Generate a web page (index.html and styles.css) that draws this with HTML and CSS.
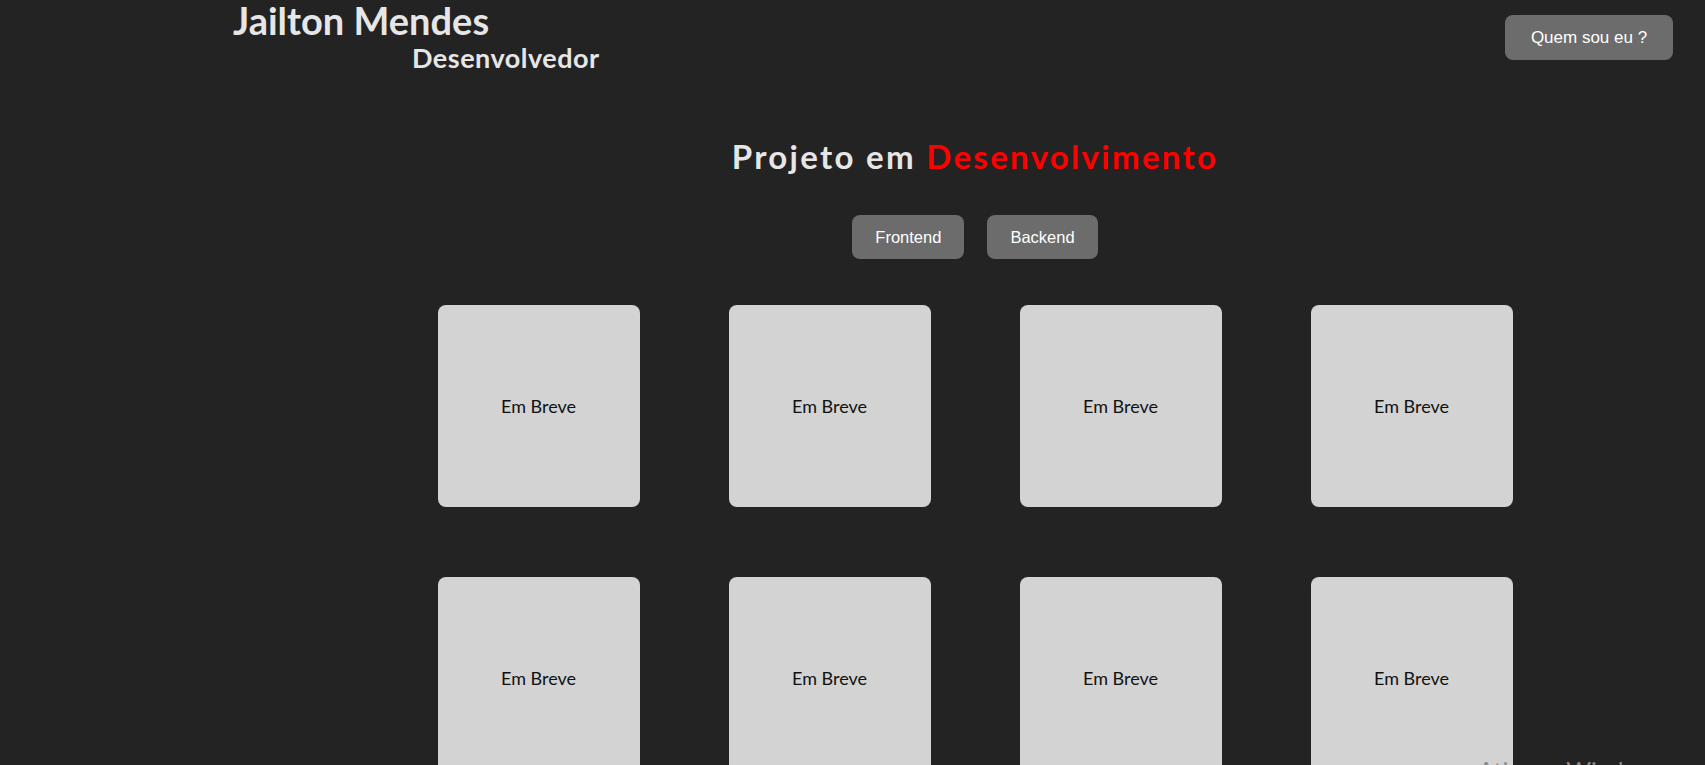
FILE: index.html
```html
<!DOCTYPE html>
<html lang="pt-BR">
<head>
<meta charset="utf-8">
<title>Jailton Mendes - Desenvolvedor</title>
<link rel="stylesheet" href="styles.css">
</head>
<body>
<header class="topbar">
  <div class="brand">
    <h1 class="brand-name">Jailton Mendes</h1>
    <h2 class="brand-role">Desenvolvedor</h2>
  </div>
  <button class="about-btn">Quem sou eu ?</button>
</header>
<main class="content">
  <h2 class="title">Projeto em <span class="accent">Desenvolvimento</span></h2>
  <div class="filters">
    <button class="filter-btn">Frontend</button>
    <button class="filter-btn">Backend</button>
  </div>
  <section class="cards">
    <div class="card">Em Breve</div>
    <div class="card">Em Breve</div>
    <div class="card">Em Breve</div>
    <div class="card">Em Breve</div>
    <div class="card">Em Breve</div>
    <div class="card">Em Breve</div>
    <div class="card">Em Breve</div>
    <div class="card">Em Breve</div>
  </section>
</main>
<div class="watermark">Ativar o Windows</div>
</body>
</html>
```
FILE: styles.css
```css
html, body {
  margin: 0;
  padding: 0;
  overflow: hidden;
}
body {
  background: #232323;
  font-family: "Lato", "Open Sans", sans-serif;
  position: relative;
  min-height: 765px;
}
.topbar {
  display: flex;
  justify-content: space-between;
  align-items: flex-start;
  height: 72px;
}
.brand {
  display: flex;
  flex-direction: column;
  padding-left: 233px;
}
.brand-name {
  margin: 0;
  font-weight: 700;
  font-size: 38px;
  line-height: 40px;
  color: #e6e6e6;
}
.brand-role {
  margin: 4px 0 0 179px;
  font-weight: 700;
  font-size: 27px;
  line-height: 27px;
  letter-spacing: 0.5px;
  color: #e6e6e6;
}
.about-btn {
  margin: 15px 32px 0 0;
  width: 168px;
  height: 45px;
  background: #6c6c6c;
  border: none;
  border-radius: 8px;
  color: #ffffff;
  font-family: "Liberation Sans", Arial, sans-serif;
  font-size: 17px;
  padding: 0;
}
.content {
  margin-left: 245px;
  display: flex;
  flex-direction: column;
  align-items: center;
}
.title {
  margin: 68px 0 0;
  font-weight: 700;
  font-size: 33px;
  line-height: 32px;
  letter-spacing: 2.3px;
  color: #e6e6e6;
}
.accent {
  color: #ff0000;
}
.filters {
  display: flex;
  gap: 23px;
  margin-top: 43px;
}
.filter-btn {
  height: 44px;
  padding: 0 23px;
  background: #6c6c6c;
  border: none;
  border-radius: 8px;
  color: #ffffff;
  font-family: "Liberation Sans", Arial, sans-serif;
  font-size: 16.5px;
}
.cards {
  display: grid;
  grid-template-columns: repeat(4, 202px);
  grid-auto-rows: 202px;
  column-gap: 89px;
  row-gap: 70px;
  margin-top: 46px;
}
.card {
  background: #d3d3d3;
  border-radius: 8px;
  display: flex;
  align-items: center;
  justify-content: center;
  font-size: 18px;
  color: #111111;
}
.watermark {
  position: absolute;
  left: 1478px;
  top: 755px;
  font-size: 24px;
  color: #8a8a8a;
  white-space: nowrap;
}
```
